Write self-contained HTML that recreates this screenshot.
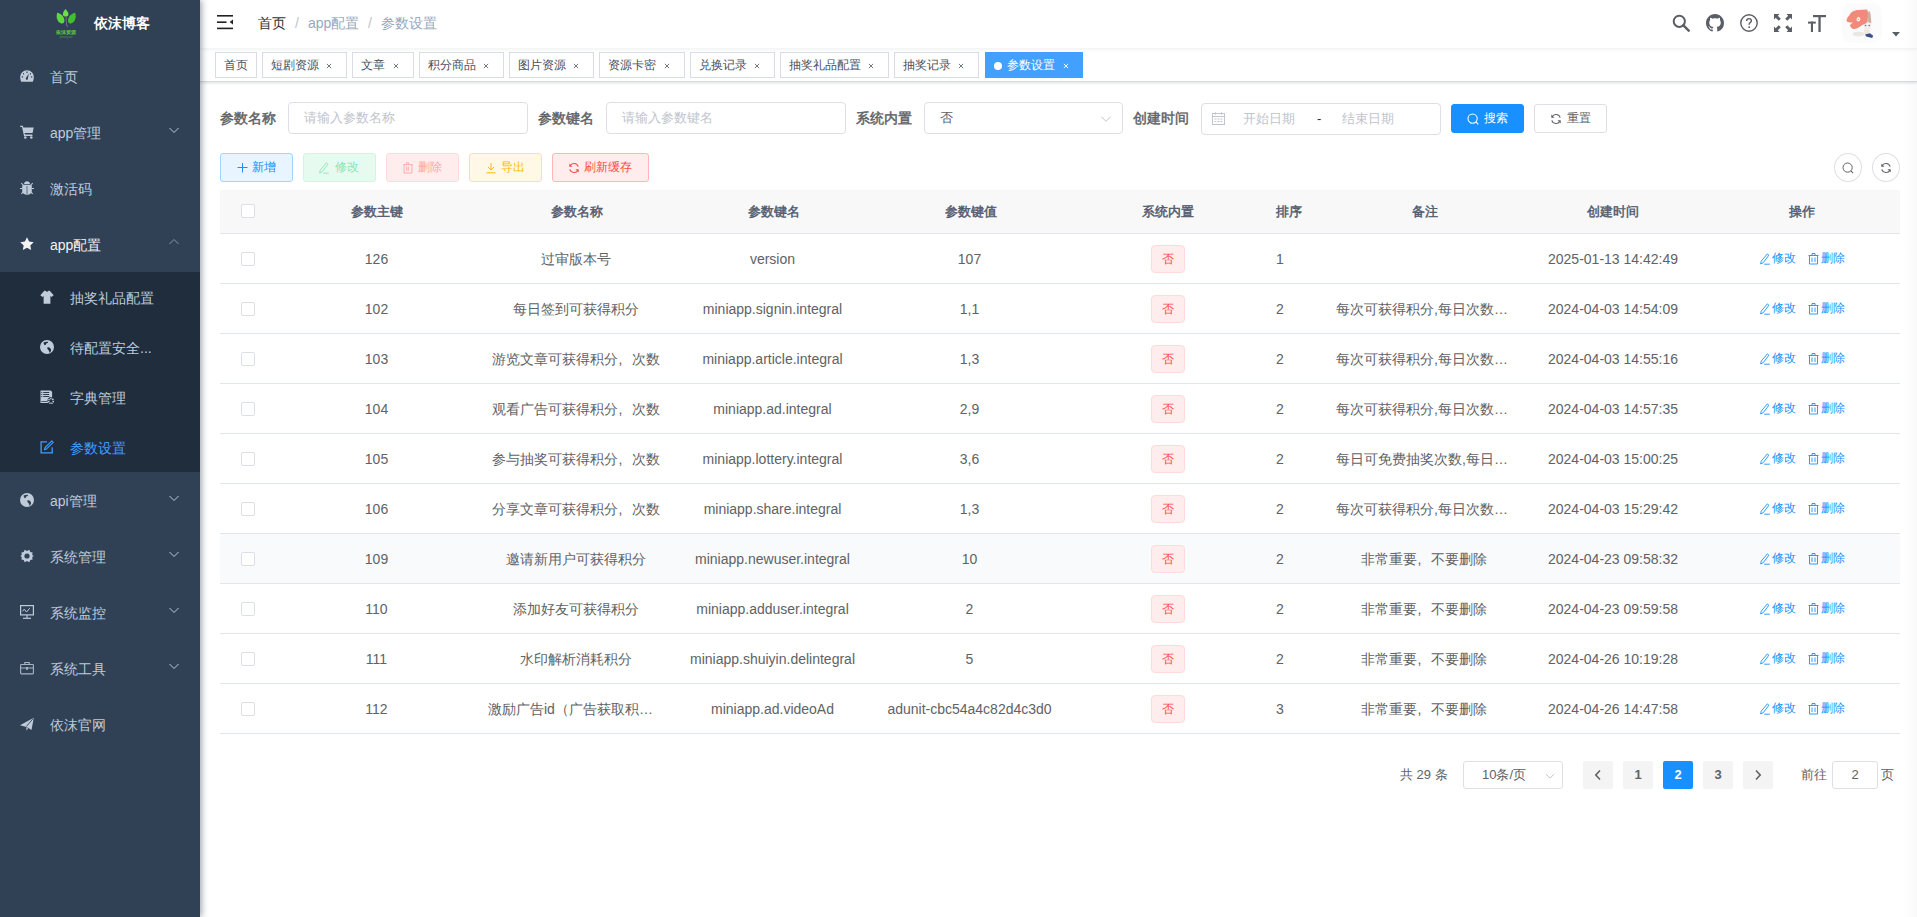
<!DOCTYPE html>
<html><head><meta charset="utf-8">
<style>
*{box-sizing:border-box;margin:0;padding:0}
html,body{width:1917px;height:917px;overflow:hidden;background:#fff;font-family:"Liberation Sans",sans-serif;font-size:14px;color:#606266}
.a{position:absolute;white-space:nowrap}
svg{display:block}
#sb{position:absolute;left:0;top:0;width:200px;height:917px;background:#304156;box-shadow:2px 0 6px rgba(0,21,41,.35);z-index:10}
.mi{position:absolute;left:0;width:200px;height:56px;line-height:56px;color:#bfcbd9;font-size:14px}
.mi .ic{position:absolute;left:20px;top:21px;width:14px;height:14px}
.mi .tx{position:absolute;left:50px;top:1px}
.mi .ar{position:absolute;left:168px;top:21px;width:12px;height:10px}
.sm{position:absolute;left:0;top:272px;width:200px;height:200px;background:#1f2d3d}
.si{position:absolute;left:0;width:200px;height:50px;line-height:50px;color:#bfcbd9;font-size:14px}
.si .ic{position:absolute;left:40px;top:18px;width:14px;height:14px}
.si .tx{position:absolute;left:70px;top:1px}
#nav{position:absolute;left:200px;top:0;width:1717px;height:48px;background:#fff;box-shadow:0 1px 4px rgba(0,21,41,.08);z-index:3}
#tags{position:absolute;left:200px;top:48px;width:1717px;height:34px;background:#fff;border-bottom:1px solid #d8dce5;box-shadow:0 1px 3px 0 rgba(0,0,0,.12),0 0 3px 0 rgba(0,0,0,.04);z-index:2}
.tg{position:absolute;top:4px;height:26px;line-height:25px;border:1px solid #d8dce5;color:#495060;background:#fff;font-size:12px;padding-left:8px}
.tg .x{position:absolute;top:10px;width:6px;height:6px}

.lb{position:absolute;top:102px;line-height:32px;color:#606266;font-size:14px;-webkit-text-stroke:.45px #606266}
.ip{position:absolute;top:102px;height:32px;border:1px solid #dcdfe6;border-radius:4px;background:#fff}
.ph{position:absolute;top:0;line-height:30px;font-size:13px;color:#c0c4cc}
.bt{position:absolute;height:29px;border:1px solid;border-radius:3px;font-size:12px;line-height:27px}
.bt svg{position:absolute;top:7.5px;width:12px;height:12px}
.bt span{position:absolute;top:0}
.th{position:absolute;top:190px;height:43px;line-height:43px;font-size:13px;color:#515a6e;text-align:center;-webkit-text-stroke:.45px #515a6e}
.td{position:absolute;white-space:nowrap;height:49px;line-height:49px;padding-top:1px;font-size:14px;color:#606266;text-align:center;overflow:hidden}
.cb{position:absolute;left:241px;width:14px;height:14px;border:1px solid #dcdfe6;border-radius:2px;background:#fff}
.hl{position:absolute;left:220px;width:1680px;height:1px;background:#dfe6ec}
.tag{position:absolute;left:1151px;width:34px;height:28px;line-height:26px;border:1px solid #ffdbdb;background:#ffeded;color:#ff4949;border-radius:4px;font-size:12px;text-align:center}
.el{text-overflow:ellipsis;padding-left:10px;padding-right:10px}
.op{position:absolute;font-size:12px;color:#1890ff;line-height:49px;height:49px}
.op svg{position:absolute;top:19px;width:12px;height:12px}
.pg{position:absolute;top:761px;height:28px;line-height:28px;min-width:30px;background:#f4f4f5;color:#606266;border-radius:2px;text-align:center;font-size:13px;font-weight:bold}
</style></head><body>
<div id="sb">
  <div class="a" style="left:50px;top:9px;width:32px;height:32px">
    <svg width="32" height="32" viewBox="0 0 32 32">
      <path d="M15.5 0C17.8 2.2 18.8 4.5 18.4 6C18 7.3 16.8 7.6 15.7 7.6C14.6 7.6 13.4 7.2 13 6C12.6 4.5 13.4 2.2 15.5 0Z" fill="#6ede48"/>
      <path d="M7.2 3.8C11 4.5 14.2 7.5 14.4 11.5C14.5 13.8 13.2 14.8 11.5 14.5C9 14 7.2 11.5 6.8 9C6.5 7 6.8 5.2 7.2 3.8Z" fill="#5ed83c"/>
      <path d="M25.2 3.8C21.4 4.5 18.2 7.5 18 11.5C17.9 13.8 19.2 14.8 20.9 14.5C23.4 14 25.2 11.5 25.6 9C25.9 7 25.6 5.2 25.2 3.8Z" fill="#40c02a"/>
      <path d="M16 7.4L16.3 12.5L16.6 16L17.6 18" stroke="#7a7690" stroke-width="0.9" fill="none"/>
      <text x="16.2" y="24.8" font-size="5.2" text-anchor="middle" fill="#5bd03a" font-weight="bold" font-family="Liberation Sans">依沫资源</text>
      <text x="16" y="28.6" font-size="2.6" text-anchor="middle" fill="#4a9a3a" font-family="Liberation Sans">yimoziyuan</text>
    </svg>
  </div>
  <div class="a" style="left:94px;top:-2px;line-height:50px;color:#fff;font-weight:bold;font-size:14px">依沫博客</div>

  <div class="mi" style="top:48px"><svg class="ic" viewBox="0 0 14 14"><path d="M7 1.2C3.2 1.2 0.2 4.2 0.2 8c0 1.5 0.3 2.7 0.9 4.8h11.8c0.6-2.1 0.9-3.3 0.9-4.8C13.8 4.2 10.8 1.2 7 1.2z" fill="#bfcbd9"/><g fill="#304156"><rect x="6.2" y="2.6" width="1.6" height="1.1" rx=".5"/><rect x="3" y="4" width="1.1" height="1.6" rx=".5"/><rect x="9.9" y="4" width="1.1" height="1.6" rx=".5"/><rect x="1.6" y="7.3" width="1.6" height="1.1" rx=".5"/><rect x="10.8" y="7.3" width="1.6" height="1.1" rx=".5"/><path d="M8.8 4.4L7.9 9.4a1.1 1.1 0 1 1-1.8-.6z"/></g></svg><span class="tx">首页</span></div>
  <div class="mi" style="top:104px"><svg class="ic" viewBox="0 0 14 14"><path d="M0.2 0.7h2.6l0.5 1.8h10.4l-1.1 5.6H4.6l0.4 1.5h7.4v1.4H4l-2-9H0.2z" fill="#bfcbd9"/><circle cx="5.3" cy="12.5" r="1.3" fill="#bfcbd9"/><circle cx="11.3" cy="12.5" r="1.3" fill="#bfcbd9"/></svg><span class="tx">app管理</span><svg class="ar" viewBox="0 0 12 10"><path d="M1.5 3l4.5 4.5L10.5 3" stroke="#bfcbd9" stroke-width="1" fill="none"/></svg></div>
  <div class="mi" style="top:160px"><svg class="ic" viewBox="0 0 14 14"><path d="M4 3.3C4 1.5 5.4 0.3 7 0.3s3 1.2 3 3z" fill="#bfcbd9"/><path d="M3.2 4h7.6c0.5 0 1 0.5 1 1v5.3c0 2-2.3 3.6-4.8 3.6S2.2 12.3 2.2 10.3V5c0-0.5 0.5-1 1-1z" fill="#bfcbd9"/><rect x="6.5" y="5" width="1" height="8.5" fill="#5f6f85"/><path d="M1.3 2.2l2 2M12.7 2.2l-2 2M0 7.5h2.3M14 7.5h-2.3M1.3 12.8l2-2M12.7 12.8l-2-2" stroke="#bfcbd9" stroke-width="1.1"/></svg><span class="tx">激活码</span></div>
  <div class="mi" style="top:216px;color:#f4f4f5"><svg class="ic" viewBox="0 0 14 14"><path d="M7 0.3l2.1 4.3 4.6.6-3.4 3.2.9 4.6L7 10.7 2.8 13l.9-4.6L.3 5.2l4.6-.6z" fill="#f4f4f5"/></svg><span class="tx">app配置</span><svg class="ar" viewBox="0 0 12 10"><path d="M1.5 7L6 2.5L10.5 7" stroke="#8a97a8" stroke-width="1" fill="none"/></svg></div>
  <div class="sm">
    <div class="si" style="top:0"><svg class="ic" viewBox="0 0 14 14"><path d="M4.3 0.8h1.2c.4.6 1 .9 1.5.9s1.1-.3 1.5-.9h1.2l4 4.4-2.2 1.9-1.1-1.1v7.7H3.6V6l-1.1 1.1L.3 5.2z" fill="#c0ccda"/></svg><span class="tx">抽奖礼品配置</span></div>
    <div class="si" style="top:50px"><svg class="ic" viewBox="0 0 14 14"><circle cx="7" cy="7" r="7" fill="#c0ccda"/><path d="M3.5 2.5c1.2-.8 3-1 4.5-.8L7.8 3 6.5 3.3 5.8 4.8 4.6 5.2 3.8 3.8z" fill="#1f2d3d"/><path d="M7.3 7.6c1-.6 2.2-.3 3 .6.7.8 1 1.8.6 2.8L9.7 13c-.4-1-.6-2-1.1-2.7-.6-.7-1.6-1.3-1.3-2.7z" fill="#1f2d3d"/></svg><span class="tx">待配置安全...</span></div>
    <div class="si" style="top:100px"><svg class="ic" viewBox="0 0 14 14"><path d="M0.5 0.6h10l1.6 1.2v5.6a3.3 3.3 0 0 0-3.5 5.5H.5z" fill="#c0ccda"/><g fill="#1f2d3d"><circle cx="1.8" cy="2.5" r=".6"/><circle cx="1.8" cy="4.5" r=".6"/><circle cx="1.8" cy="6.6" r=".6"/><rect x="3.2" y="2" width="6" height=".9"/><rect x="3.2" y="4" width="6" height=".9"/><rect x="3.2" y="6.1" width="6" height=".9"/><rect x="1.3" y="11" width="6" height=".7"/></g><circle cx="11" cy="11" r="2.4" fill="none" stroke="#c0ccda" stroke-width="1.6" stroke-dasharray="1.2 .7"/><circle cx="11" cy="11" r="1" fill="#1f2d3d"/></svg><span class="tx">字典管理</span></div>
    <div class="si" style="top:150px;color:#409eff"><svg class="ic" viewBox="0 0 14 14"><path d="M7 1.8H1.1v11.1h11.1V7.3" stroke="#409eff" stroke-width="1.3" fill="none"/><path d="M11.8 0.9l1.4 1.4-6.6 6.6-2.2.8.8-2.2z" stroke="#409eff" stroke-width="1.1" fill="none" stroke-linejoin="round"/></svg><span class="tx">参数设置</span></div>
  </div>
  <div class="mi" style="top:472px"><svg class="ic" viewBox="0 0 14 14"><circle cx="7" cy="7" r="7" fill="#bfcbd9"/><path d="M3.5 2.5c1.2-.8 3-1 4.5-.8L7.8 3 6.5 3.3 5.8 4.8 4.6 5.2 3.8 3.8z" fill="#304156"/><path d="M7.3 7.6c1-.6 2.2-.3 3 .6.7.8 1 1.8.6 2.8L9.7 13c-.4-1-.6-2-1.1-2.7-.6-.7-1.6-1.3-1.3-2.7z" fill="#304156"/></svg><span class="tx">api管理</span><svg class="ar" viewBox="0 0 12 10"><path d="M1.5 3l4.5 4.5L10.5 3" stroke="#bfcbd9" stroke-width="1" fill="none"/></svg></div>
  <div class="mi" style="top:528px"><svg class="ic" viewBox="0 0 14 14"><path d="M4.7 0.8L7 1.9 9.3.8l1 2.1 2.3.7-.4 2.3L13.8 7l-1.6 1.1.4 2.3-2.3.7-1 2.1L7 12.1l-2.3 1.1-1-2.1-2.3-.7.4-2.3L.2 7l1.6-1.1-.4-2.3 2.3-.7z" fill="#bfcbd9"/><circle cx="7" cy="7" r="2.6" fill="#304156"/></svg><span class="tx">系统管理</span><svg class="ar" viewBox="0 0 12 10"><path d="M1.5 3l4.5 4.5L10.5 3" stroke="#bfcbd9" stroke-width="1" fill="none"/></svg></div>
  <div class="mi" style="top:584px"><svg class="ic" viewBox="0 0 14 14"><rect x="0.6" y="0.6" width="12.8" height="9.3" fill="none" stroke="#bfcbd9" stroke-width="1.2"/><path d="M2.5 6.3L4.2 4.2 6.5 7 9.8 3.2" stroke="#bfcbd9" stroke-width="1" fill="none"/><path d="M7 10v3" stroke="#bfcbd9" stroke-width="1.1"/><path d="M3 13.3h8" stroke="#bfcbd9" stroke-width="1.2"/></svg><span class="tx">系统监控</span><svg class="ar" viewBox="0 0 12 10"><path d="M1.5 3l4.5 4.5L10.5 3" stroke="#bfcbd9" stroke-width="1" fill="none"/></svg></div>
  <div class="mi" style="top:640px"><svg class="ic" viewBox="0 0 14 14"><rect x="0.6" y="3.5" width="12.8" height="9.4" rx=".8" fill="none" stroke="#a8b4c3" stroke-width="1.1"/><path d="M4.8 3.5V1.5h4.4v2" stroke="#a8b4c3" stroke-width="1.1" fill="none"/><path d="M.6 7h12.8" stroke="#a8b4c3" stroke-width="1"/><rect x="6" y="6" width="2" height="2.8" fill="#a8b4c3"/></svg><span class="tx">系统工具</span><svg class="ar" viewBox="0 0 12 10"><path d="M1.5 3l4.5 4.5L10.5 3" stroke="#bfcbd9" stroke-width="1" fill="none"/></svg></div>
  <div class="mi" style="top:696px"><svg class="ic" viewBox="0 0 14 14"><path d="M0 8.2L13.8.8 11.5 13 7.2 10.3z" fill="#bfcbd9"/><path d="M13.2 1.5L6.3 9.5" stroke="#304156" stroke-width=".9"/><path d="M6 10.3l.8 3.5L8 11z" fill="#bfcbd9"/></svg><span class="tx">依沫官网</span></div>
</div>

<div id="nav">
  <svg class="a" style="left:15px;top:13px" width="20" height="20" viewBox="0 0 20 20"><rect x="2" y="2" width="16" height="1.6" fill="#222"/><rect x="2" y="8.4" width="9.5" height="1.6" fill="#222"/><rect x="2" y="14.6" width="16" height="1.6" fill="#222"/><path d="M18 6.6v4.8l-3.4-2.4z" fill="#222"/></svg>
  <div class="a" style="left:58px;top:0;line-height:46px;font-size:14px;color:#303133">首页</div>
  <div class="a" style="left:95px;top:0;line-height:46px;font-size:14px;color:#c0c4cc">/</div>
  <div class="a" style="left:108px;top:0;line-height:46px;font-size:14px;color:#97a8be">app配置</div>
  <div class="a" style="left:168px;top:0;line-height:46px;font-size:14px;color:#c0c4cc">/</div>
  <div class="a" style="left:181px;top:0;line-height:46px;font-size:14px;color:#97a8be">参数设置</div>
  <svg class="a" style="left:1472px;top:14px" width="18" height="18" viewBox="0 0 18 18"><circle cx="7.3" cy="7.3" r="5.6" fill="none" stroke="#5a5e66" stroke-width="2"/><path d="M11.4 11.4l5.3 5.3" stroke="#5a5e66" stroke-width="2.4" stroke-linecap="round"/></svg>
  <svg class="a" style="left:1506px;top:14px" width="18" height="18" viewBox="0 0 16 16"><path fill="#5a5e66" d="M8 0C3.58 0 0 3.58 0 8c0 3.54 2.29 6.53 5.47 7.59.4.07.55-.17.55-.38 0-.19-.01-.82-.01-1.49-2.01.37-2.53-.49-2.69-.94-.09-.23-.48-.94-.82-1.13-.28-.15-.68-.52-.01-.53.63-.01 1.08.58 1.23.82.72 1.21 1.87.87 2.33.66.07-.52.28-.87.51-1.07-1.78-.2-3.64-.89-3.64-3.95 0-.87.31-1.59.82-2.15-.08-.2-.36-1.02.08-2.12 0 0 .67-.21 2.2.82.64-.18 1.32-.27 2-.27.68 0 1.36.09 2 .27 1.53-1.04 2.2-.82 2.2-.82.44 1.1.16 1.92.08 2.12.51.56.82 1.27.82 2.15 0 3.07-1.87 3.75-3.65 3.95.29.25.54.73.54 1.48 0 1.07-.01 1.93-.01 2.2 0 .21.15.46.55.38A8.013 8.013 0 0016 8c0-4.42-3.58-8-8-8z"/></svg>
  <svg class="a" style="left:1540px;top:14px" width="18" height="18" viewBox="0 0 18 18"><circle cx="9" cy="9" r="8.2" fill="none" stroke="#5a5e66" stroke-width="1.4"/><path d="M6.6 7c0-1.5 1.1-2.4 2.4-2.4s2.4.9 2.4 2.2c0 1.6-2.2 1.8-2.2 3.4v.6" fill="none" stroke="#5a5e66" stroke-width="1.4"/><circle cx="9.2" cy="13.2" r=".9" fill="#5a5e66"/></svg>
  <svg class="a" style="left:1574px;top:14px" width="18" height="18" viewBox="0 0 18 18"><g fill="#5a5e66"><path d="M0 0h5.5L3.8 1.7 6.8 4.7 4.7 6.8 1.7 3.8 0 5.5z"/><path d="M18 0v5.5L16.3 3.8 13.3 6.8 11.2 4.7 14.2 1.7 12.5 0z"/><path d="M0 18v-5.5l1.7 1.7 3-3 2.1 2.1-3 3L5.5 18z"/><path d="M18 18h-5.5l1.7-1.7-3-3 2.1-2.1 3 3 1.7-1.7z"/></g></svg>
  <svg class="a" style="left:1608px;top:14px" width="18" height="18" viewBox="0 0 18 18"><g fill="#5a5e66"><rect x="5" y="1" width="13" height="2.2"/><rect x="10.4" y="1" width="2.3" height="17"/><rect x="0" y="7.6" width="7.8" height="2"/><rect x="2.9" y="7.6" width="2.1" height="10.4"/></g></svg>
  <div class="a" style="left:1642px;top:3px;width:40px;height:40px;border-radius:10px;background:#fbfbfb;overflow:hidden">
    <svg width="40" height="40" viewBox="0 0 40 40">
      <ellipse cx="16.5" cy="31" rx="6" ry="2.5" fill="#e9e8e2"/>
      <path d="M25.4 10L27.2 7.8L28.6 11L29.4 20L25.6 21Z" fill="#c9b2a2"/>
      <path d="M21.5 20c2-1 6-1 8 .5l-.5 5.5c-2 1-5 1-7-.5z" fill="#f4efea"/>
      <path d="M22 26.3l6 .5-1 5-4.5-.5z" fill="#ede8e2"/>
      <circle cx="23.5" cy="22.5" r=".8" fill="#5a6a9a"/><circle cx="27.2" cy="22.5" r=".8" fill="#5a6a9a"/>
      <path d="M23 31.5l5-1.2 3.2 2.4-1 2.3-6-1.5z" fill="#3d4f8a"/>
      <path d="M4.5 17.4C5 15 6 13.5 7.1 12.7C8.5 10 9.5 9 10.8 8.5C12.5 7.3 14.5 7 16.5 6.9C19 6.6 22 6.4 24.9 6.4C25.8 7.5 26 8.5 25.9 10.1C25.9 13 25.8 16 25.4 19C24 20.5 22.5 21 21.2 21.6C20 22.3 19.3 22.8 18.6 23.2C17 24.2 15.5 25.2 13.9 25.8C12 26.2 10.3 25.6 9.2 24.7C8.3 23.9 8 23 8.1 22.1C8.8 21 9.8 20.2 10.8 19.5C9 19.6 7.5 19.4 6 19C5 18.6 4.6 18.1 4.5 17.4Z" fill="#f08a7a"/>
      <path d="M16.5 13.8C17.8 14.5 18.5 15.5 18.3 16.6C18 17.8 17 18.6 16 18.6C15 18.4 14.4 17.5 14.6 16.3C14.8 15.2 15.5 14.2 16.5 13.8Z" fill="#fbf6ee"/>
      <circle cx="16.4" cy="16.3" r=".7" fill="#f0a040"/>
    </svg>
  </div>
  <svg class="a" style="left:1690px;top:30px" width="12" height="8" viewBox="0 0 12 8"><path d="M2 2h8l-4 4.5z" fill="#5a5e66"/></svg>
</div>
<div id="tags">
  <div class="tg" style="left:15.0px;width:42px">首页</div>
  <div class="tg" style="left:62.0px;width:85px">短剧资源<svg class="x" style="left:63.0px" viewBox="0 0 7 7"><path d="M1 1l5 5M6 1L1 6" stroke="#495060" stroke-width=".9"/></svg></div>
  <div class="tg" style="left:152.2px;width:61.4px">文章<svg class="x" style="left:39.4px" viewBox="0 0 7 7"><path d="M1 1l5 5M6 1L1 6" stroke="#495060" stroke-width=".9"/></svg></div>
  <div class="tg" style="left:219.2px;width:85px">积分商品<svg class="x" style="left:63.0px" viewBox="0 0 7 7"><path d="M1 1l5 5M6 1L1 6" stroke="#495060" stroke-width=".9"/></svg></div>
  <div class="tg" style="left:309.0px;width:85px">图片资源<svg class="x" style="left:63.0px" viewBox="0 0 7 7"><path d="M1 1l5 5M6 1L1 6" stroke="#495060" stroke-width=".9"/></svg></div>
  <div class="tg" style="left:399.2px;width:85.4px">资源卡密<svg class="x" style="left:63.4px" viewBox="0 0 7 7"><path d="M1 1l5 5M6 1L1 6" stroke="#495060" stroke-width=".9"/></svg></div>
  <div class="tg" style="left:490.2px;width:85px">兑换记录<svg class="x" style="left:63.0px" viewBox="0 0 7 7"><path d="M1 1l5 5M6 1L1 6" stroke="#495060" stroke-width=".9"/></svg></div>
  <div class="tg" style="left:580.1px;width:108.5px">抽奖礼品配置<svg class="x" style="left:86.5px" viewBox="0 0 7 7"><path d="M1 1l5 5M6 1L1 6" stroke="#495060" stroke-width=".9"/></svg></div>
  <div class="tg" style="left:694.3px;width:85px">抽奖记录<svg class="x" style="left:63.0px" viewBox="0 0 7 7"><path d="M1 1l5 5M6 1L1 6" stroke="#495060" stroke-width=".9"/></svg></div>
  <div class="tg" style="left:785px;width:98px;background:#42a0ff;border-color:#42a0ff;color:#fff;padding-left:0"><span class="a" style="left:8px;top:9px;width:8px;height:8px;border-radius:50%;background:#fff"></span><span class="a" style="left:21px;top:0px">参数设置</span><svg class="x" style="left:77px" viewBox="0 0 7 7"><path d="M1 1l5 5M6 1L1 6" stroke="#fff" stroke-width="1.1"/></svg></div>
</div>

<div id="main">
  <div class="lb" style="left:220px">参数名称</div>
  <div class="ip" style="left:288px;width:240px"><span class="ph" style="left:15px">请输入参数名称</span></div>
  <div class="lb" style="left:538px">参数键名</div>
  <div class="ip" style="left:606px;width:240px"><span class="ph" style="left:15px">请输入参数键名</span></div>
  <div class="lb" style="left:856px">系统内置</div>
  <div class="ip" style="left:924px;width:199px"><span class="ph" style="left:15px;color:#606266">否</span><svg class="a" style="left:175px;top:10px" width="12" height="12" viewBox="0 0 12 12"><path d="M1.5 3.8L6 8.3l4.5-4.5" stroke="#c0c4cc" stroke-width="1" fill="none"/></svg></div>
  <div class="lb" style="left:1133px">创建时间</div>
  <div class="ip" style="left:1201px;width:240px;top:103px">
    <svg class="a" style="left:10px;top:8px" width="13" height="13" viewBox="0 0 13 13"><rect x=".5" y="1.5" width="12" height="11" fill="none" stroke="#c0c4cc" stroke-width="1"/><path d="M.5 4.5h12" stroke="#c0c4cc"/><path d="M3.5 .3v2.4M9.5 .3v2.4" stroke="#c0c4cc"/><g fill="#c0c4cc"><rect x="2.5" y="6.5" width="2" height="1"/><rect x="5.5" y="6.5" width="2" height="1"/><rect x="8.5" y="6.5" width="2" height="1"/><rect x="2.5" y="9" width="2" height="1"/><rect x="5.5" y="9" width="2" height="1"/><rect x="8.5" y="9" width="2" height="1"/></g></svg>
    <span class="ph" style="left:41px">开始日期</span>
    <span class="ph" style="left:115px;color:#303133">-</span>
    <span class="ph" style="left:140px">结束日期</span>
  </div>
  <div class="bt" style="left:1451px;top:104px;width:73px;background:#1890ff;border-color:#1890ff;color:#fff"><svg style="left:15px" viewBox="0 0 12 12"><circle cx="5.6" cy="5.6" r="4.6" fill="none" stroke="#fff" stroke-width="1.1"/><path d="M8.9 8.9l2.4 2.4" stroke="#fff" stroke-width="1.1"/></svg><span style="left:32px">搜索</span></div>
  <div class="bt" style="left:1534px;top:104px;width:73px;background:#fff;border-color:#dcdfe6;color:#606266"><svg style="left:15px" viewBox="0 0 12 12"><path d="M10.2 4.6A4.5 4.5 0 0 0 2 3.8" stroke="#606266" stroke-width="1.1" fill="none"/><path d="M1.8 7.4A4.5 4.5 0 0 0 10 8.2" stroke="#606266" stroke-width="1.1" fill="none"/><path d="M1.3 1.5v3.2h3.2z" fill="#606266"/><path d="M10.7 10.5V7.3H7.5z" fill="#606266"/></svg><span style="left:32px">重置</span></div>

  <div class="bt" style="left:220px;top:153px;width:73px;background:#e8f4ff;border-color:#a3d3ff;color:#1890ff"><svg style="left:15px" viewBox="0 0 12 12"><path d="M6.5 1v9.5M1.5 5.5h10" stroke="#1890ff" stroke-width="1"/></svg><span style="left:31px">新增</span></div>
  <div class="bt" style="left:303px;top:153px;width:73px;background:#e7faf0;border-color:#d0f5e0;color:#89e7b3"><svg style="left:15px" viewBox="0 0 12 12"><path d="M7.3 0.9l1.6 1.3-5.6 7.4-2.6 1.4.5-2.8z" stroke="#89e7b3" stroke-width=".9" fill="none" stroke-linejoin="round"/><path d="M4.2 11.2h5.6" stroke="#89e7b3" stroke-width=".9"/></svg><span style="left:31px">修改</span></div>
  <div class="bt" style="left:386px;top:153px;width:73px;background:#ffeded;border-color:#ffdbdb;color:#ffa4a4"><svg style="left:15px" viewBox="0 0 12 12"><path d="M1.2 2.7h9.6M4.4 2.7V.8h2.2v1.9M2.1 2.7v8.3h7.8V2.7M4.7 4.7v4.2M6.3 4.7v4.2" stroke="#ffa4a4" stroke-width=".9" fill="none"/></svg><span style="left:31px">删除</span></div>
  <div class="bt" style="left:469px;top:153px;width:73px;background:#fff8e6;border-color:#ffe399;color:#ffba00"><svg style="left:15px" viewBox="0 0 12 12"><path d="M6 1v6.8M3 5l3 3 3-3M1.5 10.8h9" stroke="#ffba00" stroke-width="1" fill="none"/></svg><span style="left:31px">导出</span></div>
  <div class="bt" style="left:552px;top:153px;width:97px;background:#ffeded;border-color:#ffb6b6;color:#ff4949"><svg style="left:15px" viewBox="0 0 12 12"><path d="M10.2 4.6A4.5 4.5 0 0 0 2 3.8" stroke="#ff4949" stroke-width="1.1" fill="none"/><path d="M1.8 7.4A4.5 4.5 0 0 0 10 8.2" stroke="#ff4949" stroke-width="1.1" fill="none"/><path d="M1.3 1.5v3.2h3.2z" fill="#ff4949"/><path d="M10.7 10.5V7.3H7.5z" fill="#ff4949"/></svg><span style="left:31px">刷新缓存</span></div>
  <div class="a" style="left:1834px;top:153px;width:28px;height:29px;border:1px solid #dcdfe6;border-radius:50%"><svg class="a" style="left:7px;top:7.5px" width="12" height="12" viewBox="0 0 12 12"><circle cx="5.6" cy="5.6" r="4.6" fill="none" stroke="#606266" stroke-width="1"/><path d="M8.9 8.9l2.2 2.2" stroke="#606266" stroke-width="1.1"/></svg></div>
  <div class="a" style="left:1872px;top:153px;width:28px;height:29px;border:1px solid #dcdfe6;border-radius:50%"><svg class="a" style="left:7px;top:7.5px" width="12" height="12" viewBox="0 0 12 12"><path d="M10.2 4.6A4.5 4.5 0 0 0 2 3.8" stroke="#606266" stroke-width="1.1" fill="none"/><path d="M1.8 7.4A4.5 4.5 0 0 0 10 8.2" stroke="#606266" stroke-width="1.1" fill="none"/><path d="M1.3 1.5v3.2h3.2z" fill="#606266"/><path d="M10.7 10.5V7.3H7.5z" fill="#606266"/></svg></div>

  <div class="a" style="left:220px;top:190px;width:1680px;height:43px;background:#f8f8f9"></div>
  <div class="hl" style="top:233px"></div>
  <div class="cb" style="top:204px"></div>
  <div class="th" style="left:275px;width:203px">参数主键</div>
  <div class="th" style="left:478px;width:197px">参数名称</div>
  <div class="th" style="left:675px;width:197px">参数键名</div>
  <div class="th" style="left:872px;width:197px">参数键值</div>
  <div class="th" style="left:1069px;width:197px">系统内置</div>
  <div class="th" style="left:1266px;width:60px;text-align:left;padding-left:10px">排序</div>
  <div class="th" style="left:1326px;width:197px">备注</div>
  <div class="th" style="left:1523px;width:180px">创建时间</div>
  <div class="th" style="left:1703px;width:197px">操作</div>
  <div class="cb" style="top:252px"></div>
  <div class="td" style="left:275px;top:234px;width:203px">126</div>
  <div class="td" style="left:477px;top:234px;width:197px">过审版本号</div>
  <div class="td" style="left:674px;top:234px;width:197px">version</div>
  <div class="td" style="left:871px;top:234px;width:197px">107</div>
  <div class="tag" style="top:245px">否</div>
  <div class="td" style="left:1266px;top:234px;width:60px;text-align:left;padding-left:10px">1</div>
  <div class="td" style="left:1325px;top:234px;width:197px"></div>
  <div class="td" style="left:1523px;top:234px;width:180px">2025-01-13 14:42:49</div>
  <div class="op" style="left:1760px;top:234px;width:36px"><svg style="left:0" viewBox="0 0 12 12"><path d="M7.3 0.9l1.6 1.3-5.6 7.4-2.6 1.4.5-2.8z" stroke="#1890ff" stroke-width=".9" fill="none" stroke-linejoin="round"/><path d="M4.2 11.2h5.6" stroke="#1890ff" stroke-width=".9"/></svg><span class="a" style="left:12px">修改</span></div>
  <div class="op" style="left:1809px;top:234px;width:36px"><svg style="left:-1px" viewBox="0 0 12 12"><path d="M.5 2.5h10M4 2.5V.5h3v2M1.5 2.5v8.5h8V2.5M4 4.5v4.5M7 4.5v4.5" stroke="#1890ff" stroke-width=".9" fill="none"/></svg><span class="a" style="left:12px">删除</span></div>
  <div class="hl" style="top:283px"></div>
  <div class="cb" style="top:302px"></div>
  <div class="td" style="left:275px;top:284px;width:203px">102</div>
  <div class="td" style="left:477px;top:284px;width:197px">每日签到可获得积分</div>
  <div class="td" style="left:674px;top:284px;width:197px">miniapp.signin.integral</div>
  <div class="td" style="left:871px;top:284px;width:197px">1,1</div>
  <div class="tag" style="top:295px">否</div>
  <div class="td" style="left:1266px;top:284px;width:60px;text-align:left;padding-left:10px">2</div>
  <div class="td el" style="left:1326px;top:284px;width:197px">每次可获得积分,每日次数限制</div>
  <div class="td" style="left:1523px;top:284px;width:180px">2024-04-03 14:54:09</div>
  <div class="op" style="left:1760px;top:284px;width:36px"><svg style="left:0" viewBox="0 0 12 12"><path d="M7.3 0.9l1.6 1.3-5.6 7.4-2.6 1.4.5-2.8z" stroke="#1890ff" stroke-width=".9" fill="none" stroke-linejoin="round"/><path d="M4.2 11.2h5.6" stroke="#1890ff" stroke-width=".9"/></svg><span class="a" style="left:12px">修改</span></div>
  <div class="op" style="left:1809px;top:284px;width:36px"><svg style="left:-1px" viewBox="0 0 12 12"><path d="M.5 2.5h10M4 2.5V.5h3v2M1.5 2.5v8.5h8V2.5M4 4.5v4.5M7 4.5v4.5" stroke="#1890ff" stroke-width=".9" fill="none"/></svg><span class="a" style="left:12px">删除</span></div>
  <div class="hl" style="top:333px"></div>
  <div class="cb" style="top:352px"></div>
  <div class="td" style="left:275px;top:334px;width:203px">103</div>
  <div class="td" style="left:477px;top:334px;width:197px">游览文章可获得积分<span style="display:inline-block;width:14px;padding-left:1px;text-align:left">,</span>次数</div>
  <div class="td" style="left:674px;top:334px;width:197px">miniapp.article.integral</div>
  <div class="td" style="left:871px;top:334px;width:197px">1,3</div>
  <div class="tag" style="top:345px">否</div>
  <div class="td" style="left:1266px;top:334px;width:60px;text-align:left;padding-left:10px">2</div>
  <div class="td el" style="left:1326px;top:334px;width:197px">每次可获得积分,每日次数限制</div>
  <div class="td" style="left:1523px;top:334px;width:180px">2024-04-03 14:55:16</div>
  <div class="op" style="left:1760px;top:334px;width:36px"><svg style="left:0" viewBox="0 0 12 12"><path d="M7.3 0.9l1.6 1.3-5.6 7.4-2.6 1.4.5-2.8z" stroke="#1890ff" stroke-width=".9" fill="none" stroke-linejoin="round"/><path d="M4.2 11.2h5.6" stroke="#1890ff" stroke-width=".9"/></svg><span class="a" style="left:12px">修改</span></div>
  <div class="op" style="left:1809px;top:334px;width:36px"><svg style="left:-1px" viewBox="0 0 12 12"><path d="M.5 2.5h10M4 2.5V.5h3v2M1.5 2.5v8.5h8V2.5M4 4.5v4.5M7 4.5v4.5" stroke="#1890ff" stroke-width=".9" fill="none"/></svg><span class="a" style="left:12px">删除</span></div>
  <div class="hl" style="top:383px"></div>
  <div class="cb" style="top:402px"></div>
  <div class="td" style="left:275px;top:384px;width:203px">104</div>
  <div class="td" style="left:477px;top:384px;width:197px">观看广告可获得积分<span style="display:inline-block;width:14px;padding-left:1px;text-align:left">,</span>次数</div>
  <div class="td" style="left:674px;top:384px;width:197px">miniapp.ad.integral</div>
  <div class="td" style="left:871px;top:384px;width:197px">2,9</div>
  <div class="tag" style="top:395px">否</div>
  <div class="td" style="left:1266px;top:384px;width:60px;text-align:left;padding-left:10px">2</div>
  <div class="td el" style="left:1326px;top:384px;width:197px">每次可获得积分,每日次数限制</div>
  <div class="td" style="left:1523px;top:384px;width:180px">2024-04-03 14:57:35</div>
  <div class="op" style="left:1760px;top:384px;width:36px"><svg style="left:0" viewBox="0 0 12 12"><path d="M7.3 0.9l1.6 1.3-5.6 7.4-2.6 1.4.5-2.8z" stroke="#1890ff" stroke-width=".9" fill="none" stroke-linejoin="round"/><path d="M4.2 11.2h5.6" stroke="#1890ff" stroke-width=".9"/></svg><span class="a" style="left:12px">修改</span></div>
  <div class="op" style="left:1809px;top:384px;width:36px"><svg style="left:-1px" viewBox="0 0 12 12"><path d="M.5 2.5h10M4 2.5V.5h3v2M1.5 2.5v8.5h8V2.5M4 4.5v4.5M7 4.5v4.5" stroke="#1890ff" stroke-width=".9" fill="none"/></svg><span class="a" style="left:12px">删除</span></div>
  <div class="hl" style="top:433px"></div>
  <div class="cb" style="top:452px"></div>
  <div class="td" style="left:275px;top:434px;width:203px">105</div>
  <div class="td" style="left:477px;top:434px;width:197px">参与抽奖可获得积分<span style="display:inline-block;width:14px;padding-left:1px;text-align:left">,</span>次数</div>
  <div class="td" style="left:674px;top:434px;width:197px">miniapp.lottery.integral</div>
  <div class="td" style="left:871px;top:434px;width:197px">3,6</div>
  <div class="tag" style="top:445px">否</div>
  <div class="td" style="left:1266px;top:434px;width:60px;text-align:left;padding-left:10px">2</div>
  <div class="td el" style="left:1326px;top:434px;width:197px">每日可免费抽奖次数,每日限制</div>
  <div class="td" style="left:1523px;top:434px;width:180px">2024-04-03 15:00:25</div>
  <div class="op" style="left:1760px;top:434px;width:36px"><svg style="left:0" viewBox="0 0 12 12"><path d="M7.3 0.9l1.6 1.3-5.6 7.4-2.6 1.4.5-2.8z" stroke="#1890ff" stroke-width=".9" fill="none" stroke-linejoin="round"/><path d="M4.2 11.2h5.6" stroke="#1890ff" stroke-width=".9"/></svg><span class="a" style="left:12px">修改</span></div>
  <div class="op" style="left:1809px;top:434px;width:36px"><svg style="left:-1px" viewBox="0 0 12 12"><path d="M.5 2.5h10M4 2.5V.5h3v2M1.5 2.5v8.5h8V2.5M4 4.5v4.5M7 4.5v4.5" stroke="#1890ff" stroke-width=".9" fill="none"/></svg><span class="a" style="left:12px">删除</span></div>
  <div class="hl" style="top:483px"></div>
  <div class="cb" style="top:502px"></div>
  <div class="td" style="left:275px;top:484px;width:203px">106</div>
  <div class="td" style="left:477px;top:484px;width:197px">分享文章可获得积分<span style="display:inline-block;width:14px;padding-left:1px;text-align:left">,</span>次数</div>
  <div class="td" style="left:674px;top:484px;width:197px">miniapp.share.integral</div>
  <div class="td" style="left:871px;top:484px;width:197px">1,3</div>
  <div class="tag" style="top:495px">否</div>
  <div class="td" style="left:1266px;top:484px;width:60px;text-align:left;padding-left:10px">2</div>
  <div class="td el" style="left:1326px;top:484px;width:197px">每次可获得积分,每日次数限制</div>
  <div class="td" style="left:1523px;top:484px;width:180px">2024-04-03 15:29:42</div>
  <div class="op" style="left:1760px;top:484px;width:36px"><svg style="left:0" viewBox="0 0 12 12"><path d="M7.3 0.9l1.6 1.3-5.6 7.4-2.6 1.4.5-2.8z" stroke="#1890ff" stroke-width=".9" fill="none" stroke-linejoin="round"/><path d="M4.2 11.2h5.6" stroke="#1890ff" stroke-width=".9"/></svg><span class="a" style="left:12px">修改</span></div>
  <div class="op" style="left:1809px;top:484px;width:36px"><svg style="left:-1px" viewBox="0 0 12 12"><path d="M.5 2.5h10M4 2.5V.5h3v2M1.5 2.5v8.5h8V2.5M4 4.5v4.5M7 4.5v4.5" stroke="#1890ff" stroke-width=".9" fill="none"/></svg><span class="a" style="left:12px">删除</span></div>
  <div class="hl" style="top:533px"></div>
  <div class="a" style="left:220px;top:534px;width:1680px;height:49px;background:#f9fafc"></div>
  <div class="cb" style="top:552px"></div>
  <div class="td" style="left:275px;top:534px;width:203px">109</div>
  <div class="td" style="left:477px;top:534px;width:197px">邀请新用户可获得积分</div>
  <div class="td" style="left:674px;top:534px;width:197px">miniapp.newuser.integral</div>
  <div class="td" style="left:871px;top:534px;width:197px">10</div>
  <div class="tag" style="top:545px">否</div>
  <div class="td" style="left:1266px;top:534px;width:60px;text-align:left;padding-left:10px">2</div>
  <div class="td" style="left:1325px;top:534px;width:197px">非常重要<span style="display:inline-block;width:14px;padding-left:1px;text-align:left">,</span>不要删除</div>
  <div class="td" style="left:1523px;top:534px;width:180px">2024-04-23 09:58:32</div>
  <div class="op" style="left:1760px;top:534px;width:36px"><svg style="left:0" viewBox="0 0 12 12"><path d="M7.3 0.9l1.6 1.3-5.6 7.4-2.6 1.4.5-2.8z" stroke="#1890ff" stroke-width=".9" fill="none" stroke-linejoin="round"/><path d="M4.2 11.2h5.6" stroke="#1890ff" stroke-width=".9"/></svg><span class="a" style="left:12px">修改</span></div>
  <div class="op" style="left:1809px;top:534px;width:36px"><svg style="left:-1px" viewBox="0 0 12 12"><path d="M.5 2.5h10M4 2.5V.5h3v2M1.5 2.5v8.5h8V2.5M4 4.5v4.5M7 4.5v4.5" stroke="#1890ff" stroke-width=".9" fill="none"/></svg><span class="a" style="left:12px">删除</span></div>
  <div class="hl" style="top:583px"></div>
  <div class="cb" style="top:602px"></div>
  <div class="td" style="left:275px;top:584px;width:203px">110</div>
  <div class="td" style="left:477px;top:584px;width:197px">添加好友可获得积分</div>
  <div class="td" style="left:674px;top:584px;width:197px">miniapp.adduser.integral</div>
  <div class="td" style="left:871px;top:584px;width:197px">2</div>
  <div class="tag" style="top:595px">否</div>
  <div class="td" style="left:1266px;top:584px;width:60px;text-align:left;padding-left:10px">2</div>
  <div class="td" style="left:1325px;top:584px;width:197px">非常重要<span style="display:inline-block;width:14px;padding-left:1px;text-align:left">,</span>不要删除</div>
  <div class="td" style="left:1523px;top:584px;width:180px">2024-04-23 09:59:58</div>
  <div class="op" style="left:1760px;top:584px;width:36px"><svg style="left:0" viewBox="0 0 12 12"><path d="M7.3 0.9l1.6 1.3-5.6 7.4-2.6 1.4.5-2.8z" stroke="#1890ff" stroke-width=".9" fill="none" stroke-linejoin="round"/><path d="M4.2 11.2h5.6" stroke="#1890ff" stroke-width=".9"/></svg><span class="a" style="left:12px">修改</span></div>
  <div class="op" style="left:1809px;top:584px;width:36px"><svg style="left:-1px" viewBox="0 0 12 12"><path d="M.5 2.5h10M4 2.5V.5h3v2M1.5 2.5v8.5h8V2.5M4 4.5v4.5M7 4.5v4.5" stroke="#1890ff" stroke-width=".9" fill="none"/></svg><span class="a" style="left:12px">删除</span></div>
  <div class="hl" style="top:633px"></div>
  <div class="cb" style="top:652px"></div>
  <div class="td" style="left:275px;top:634px;width:203px">111</div>
  <div class="td" style="left:477px;top:634px;width:197px">水印解析消耗积分</div>
  <div class="td" style="left:674px;top:634px;width:197px">miniapp.shuiyin.delintegral</div>
  <div class="td" style="left:871px;top:634px;width:197px">5</div>
  <div class="tag" style="top:645px">否</div>
  <div class="td" style="left:1266px;top:634px;width:60px;text-align:left;padding-left:10px">2</div>
  <div class="td" style="left:1325px;top:634px;width:197px">非常重要<span style="display:inline-block;width:14px;padding-left:1px;text-align:left">,</span>不要删除</div>
  <div class="td" style="left:1523px;top:634px;width:180px">2024-04-26 10:19:28</div>
  <div class="op" style="left:1760px;top:634px;width:36px"><svg style="left:0" viewBox="0 0 12 12"><path d="M7.3 0.9l1.6 1.3-5.6 7.4-2.6 1.4.5-2.8z" stroke="#1890ff" stroke-width=".9" fill="none" stroke-linejoin="round"/><path d="M4.2 11.2h5.6" stroke="#1890ff" stroke-width=".9"/></svg><span class="a" style="left:12px">修改</span></div>
  <div class="op" style="left:1809px;top:634px;width:36px"><svg style="left:-1px" viewBox="0 0 12 12"><path d="M.5 2.5h10M4 2.5V.5h3v2M1.5 2.5v8.5h8V2.5M4 4.5v4.5M7 4.5v4.5" stroke="#1890ff" stroke-width=".9" fill="none"/></svg><span class="a" style="left:12px">删除</span></div>
  <div class="hl" style="top:683px"></div>
  <div class="cb" style="top:702px"></div>
  <div class="td" style="left:275px;top:684px;width:203px">112</div>
  <div class="td el" style="left:478px;top:684px;width:197px">激励广告id（广告获取积分）</div>
  <div class="td" style="left:674px;top:684px;width:197px">miniapp.ad.videoAd</div>
  <div class="td" style="left:871px;top:684px;width:197px">adunit-cbc54a4c82d4c3d0</div>
  <div class="tag" style="top:695px">否</div>
  <div class="td" style="left:1266px;top:684px;width:60px;text-align:left;padding-left:10px">3</div>
  <div class="td" style="left:1325px;top:684px;width:197px">非常重要<span style="display:inline-block;width:14px;padding-left:1px;text-align:left">,</span>不要删除</div>
  <div class="td" style="left:1523px;top:684px;width:180px">2024-04-26 14:47:58</div>
  <div class="op" style="left:1760px;top:684px;width:36px"><svg style="left:0" viewBox="0 0 12 12"><path d="M7.3 0.9l1.6 1.3-5.6 7.4-2.6 1.4.5-2.8z" stroke="#1890ff" stroke-width=".9" fill="none" stroke-linejoin="round"/><path d="M4.2 11.2h5.6" stroke="#1890ff" stroke-width=".9"/></svg><span class="a" style="left:12px">修改</span></div>
  <div class="op" style="left:1809px;top:684px;width:36px"><svg style="left:-1px" viewBox="0 0 12 12"><path d="M.5 2.5h10M4 2.5V.5h3v2M1.5 2.5v8.5h8V2.5M4 4.5v4.5M7 4.5v4.5" stroke="#1890ff" stroke-width=".9" fill="none"/></svg><span class="a" style="left:12px">删除</span></div>
  <div class="hl" style="top:733px"></div>

  <div class="a" style="left:1400px;top:761px;line-height:28px;font-size:13px;color:#606266">共 29 条</div>
  <div class="a" style="left:1463px;top:761px;width:100px;height:28px;border:1px solid #dcdfe6;border-radius:3px"><span class="a" style="left:18px;top:0;line-height:26px;font-size:13px;color:#606266">10条/页</span><svg class="a" style="left:81px;top:9px" width="10" height="10" viewBox="0 0 10 10"><path d="M1 3.2l4 4 4-4" stroke="#c0c4cc" stroke-width="1" fill="none"/></svg></div>
  <div class="pg" style="left:1583px;width:30px"><svg class="a" style="left:10px;top:8px" width="10" height="12" viewBox="0 0 10 12"><path d="M7 1.5L2.8 6 7 10.5" stroke="#606266" stroke-width="1.6" fill="none"/></svg></div>
  <div class="pg" style="left:1623px;width:30px">1</div>
  <div class="pg" style="left:1663px;width:30px;background:#1890ff;color:#fff">2</div>
  <div class="pg" style="left:1703px;width:30px">3</div>
  <div class="pg" style="left:1743px;width:30px"><svg class="a" style="left:10px;top:8px" width="10" height="12" viewBox="0 0 10 12"><path d="M3 1.5L7.2 6 3 10.5" stroke="#606266" stroke-width="1.6" fill="none"/></svg></div>
  <div class="a" style="left:1801px;top:761px;line-height:28px;font-size:13px;color:#606266">前往</div>
  <div class="a" style="left:1832px;top:761px;width:46px;height:28px;border:1px solid #dcdfe6;border-radius:3px;text-align:center;line-height:26px;font-size:13px;color:#606266">2</div>
  <div class="a" style="left:1881px;top:761px;line-height:28px;font-size:13px;color:#606266">页</div>
</div>
<div class="a" style="left:1903px;top:0;width:14px;height:917px;background:linear-gradient(to right,rgba(0,0,0,0),rgba(0,0,0,.025));z-index:20;pointer-events:none"></div>
</body></html>
